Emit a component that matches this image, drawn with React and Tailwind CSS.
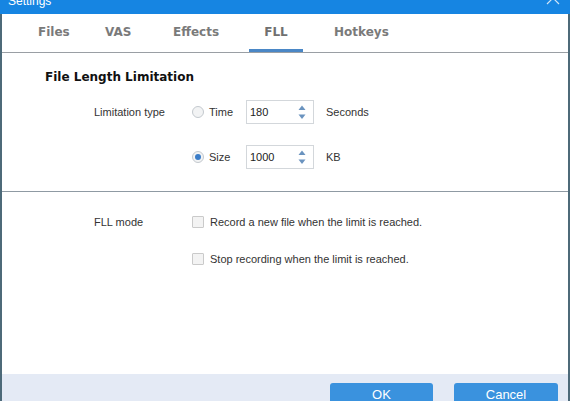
import React from "react";

function Radio({ checked }) {
  return (
    <div className="w-[12px] h-[12px] rounded-full border border-[#c4c9ce] bg-[#f2f3f4] flex items-center justify-center">
      {checked && <div className="w-[6px] h-[6px] rounded-full bg-[#3b7dc8]" />}
    </div>
  );
}

function Spinner() {
  return (
    <svg width="8" height="15" viewBox="0 0 8 15">
      <path d="M0.5 5 L4 0.5 L7.5 5 Z" fill="#6a93bf" />
      <path d="M0.5 9.5 L7.5 9.5 L4 14 Z" fill="#6a93bf" />
    </svg>
  );
}

function NumberBox({ value }) {
  return (
    <div className="w-[68px] h-[24px] border border-[#d3d7db] bg-white flex items-center justify-between pl-[3px] pr-[7px] text-[11px] text-[#222]">
      <span>{value}</span>
      <Spinner />
    </div>
  );
}

function Check() {
  return <div className="w-[12px] h-[12px] border border-[#cacaca] bg-[#f3f3f3] rounded-[1px]" />;
}

export default function App() {
  const tabs = [
    { label: "Files", w: "w-[67px]" },
    { label: "VAS", w: "w-[68px]" },
    { label: "Effects", w: "w-[76px]" },
  ];

  return (
    <div className="w-[570px] h-[401px] overflow-hidden flex flex-col bg-white font-['Liberation_Sans',Arial,sans-serif]">
      {/* title bar */}
      <div className="h-[14px] shrink-0 bg-[#1685e2] overflow-hidden flex justify-between pl-[8px] pr-[10px]">
        <span className="text-[12px] leading-[14px] -mt-[6px] text-white">Settings</span>
        <svg width="14" height="14" viewBox="0 0 14 14" className="-mt-[9px]">
          <path d="M1 1 L13 13 M13 1 L1 13" stroke="#cfe4f7" strokeWidth="1.2" />
        </svg>
      </div>

      <div className="flex-1 flex flex-col border-l-2 border-r-2 border-[#4d6a79] min-h-0">
        {/* tabs */}
        <div className="h-[39px] shrink-0 flex border-b border-[#9a9fa4] pl-[36px] font-['DejaVu_Sans',sans-serif] font-bold text-[12px] text-[#7a7a7a]">
          {tabs.map((t) => (
            <div key={t.label} className={`${t.w} flex items-center border-b-[3px] border-transparent`}>
              {t.label}
            </div>
          ))}
          <div className="w-[54px] flex items-center justify-center border-b-[3px] border-[#4a87c6] text-[#707070]">
            FLL
          </div>
          <div className="w-[31px]" />
          <div className="flex items-center border-b-[3px] border-transparent">Hotkeys</div>
        </div>

        {/* file length limitation */}
        <div className="shrink-0 border-b border-[#8f9aa3] pt-[16px] pb-[22px]">
          <div className="pl-[43px] h-[16px] flex items-center font-['DejaVu_Sans',sans-serif] font-bold text-[12px] text-[#111]">
            File Length Limitation
          </div>
          <div className="mt-[15px] pl-[92px] h-[24px] flex items-center text-[11px] text-[#333]">
            <div className="w-[98px]">Limitation type</div>
            <div className="w-[54px] flex items-center gap-[5px]">
              <Radio />
              <span>Time</span>
            </div>
            <NumberBox value="180" />
            <span className="ml-[12px]">Seconds</span>
          </div>
          <div className="mt-[21px] pl-[92px] h-[24px] flex items-center text-[11px] text-[#333]">
            <div className="w-[98px]" />
            <div className="w-[54px] flex items-center gap-[5px]">
              <Radio checked />
              <span>Size</span>
            </div>
            <NumberBox value="1000" />
            <span className="ml-[12px]">KB</span>
          </div>
        </div>

        {/* FLL mode */}
        <div className="flex-1 pt-[22px] text-[11px] text-[#333]">
          <div className="pl-[92px] h-[16px] flex items-center">
            <div className="w-[98px]">FLL mode</div>
            <Check />
            <span className="ml-[6px]">Record a new file when the limit is reached.</span>
          </div>
          <div className="mt-[21px] pl-[92px] h-[16px] flex items-center">
            <div className="w-[98px]" />
            <Check />
            <span className="ml-[6px]">Stop recording when the limit is reached.</span>
          </div>
        </div>

        {/* footer */}
        <div className="h-[27px] shrink-0 bg-[#e4eaf5] flex justify-end gap-[21px] pr-[10px] pt-[9px] overflow-hidden">
          <button className="w-[103px] h-[28px] shrink-0 rounded-t-[3px] bg-[#3a92de] text-white text-[13px] leading-[24px] pb-[4px]">
            OK
          </button>
          <button className="w-[104px] h-[28px] shrink-0 rounded-t-[3px] bg-[#3a92de] text-white text-[13px] leading-[24px] pb-[4px]">
            Cancel
          </button>
        </div>
      </div>
    </div>
  );
}
